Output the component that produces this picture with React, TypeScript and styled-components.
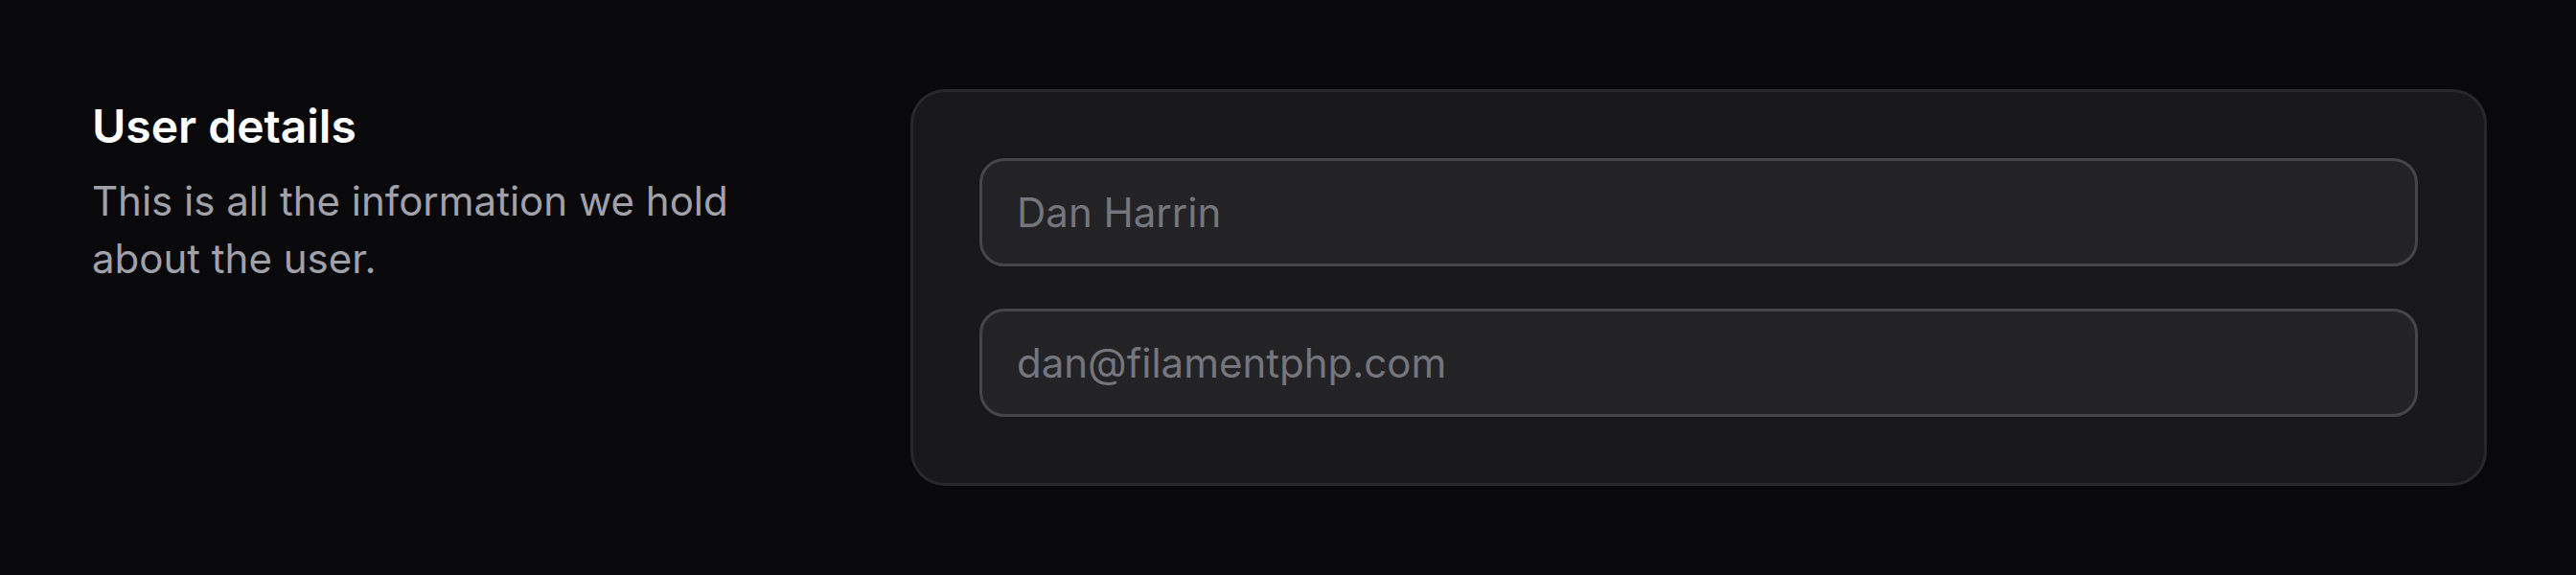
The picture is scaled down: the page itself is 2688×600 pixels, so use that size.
import React from 'react';
import styled, { createGlobalStyle } from 'styled-components';

const GlobalStyle = createGlobalStyle`
  html, body {
    margin: 0;
    background: #09090b;
    font-family: Inter, "Noto Sans", sans-serif;
  }
`;

const Page = styled.div`
  min-height: 600px;
  box-sizing: border-box;
  padding: 93px 93px 0 96px;
`;

const Section = styled.section`
  display: grid;
  grid-template-columns: 785px 1fr;
  column-gap: 69px;
  align-items: start;
`;

const Aside = styled.div`
  display: flex;
  flex-direction: column;
  gap: 12px;
  padding-top: 3px;
`;

const Heading = styled.h2`
  margin: 0;
  font-size: 48px;
  line-height: 72px;
  font-weight: 600;
  color: #ffffff;
`;

const Description = styled.p`
  margin: 0;
  font-size: 42px;
  line-height: 60px;
  color: #a1a1aa;
`;

const Card = styled.div`
  display: flex;
  flex-direction: column;
  gap: 44px;
  padding: 69px 69px;
  border: 3px solid rgba(255, 255, 255, 0.07);
  border-radius: 36px;
  background: #18181b;
`;

const Field = styled.input`
  box-sizing: border-box;
  height: 113px;
  width: 100%;
  padding: 0 36px;
  border: 3px solid #46464a;
  border-radius: 26px;
  background: #232326;
  font-family: inherit;
  font-size: 42px;
  color: #e4e4e7;
  outline: none;

  &::placeholder {
    color: #75757d;
  }
`;

const fields = ['Dan Harrin', 'dan@filamentphp.com'];

export default function App() {
    return (
        <>
            <GlobalStyle />
            <Page>
                <Section>
                    <Aside>
                        <Heading>User details</Heading>
                        <Description>This is all the information we hold about the user.</Description>
                    </Aside>
                    <Card>
                        {fields.map((value, index) => <Field key={index} placeholder={value} readOnly />)}
                    </Card>
                </Section>
            </Page>
        </>
    );
}
